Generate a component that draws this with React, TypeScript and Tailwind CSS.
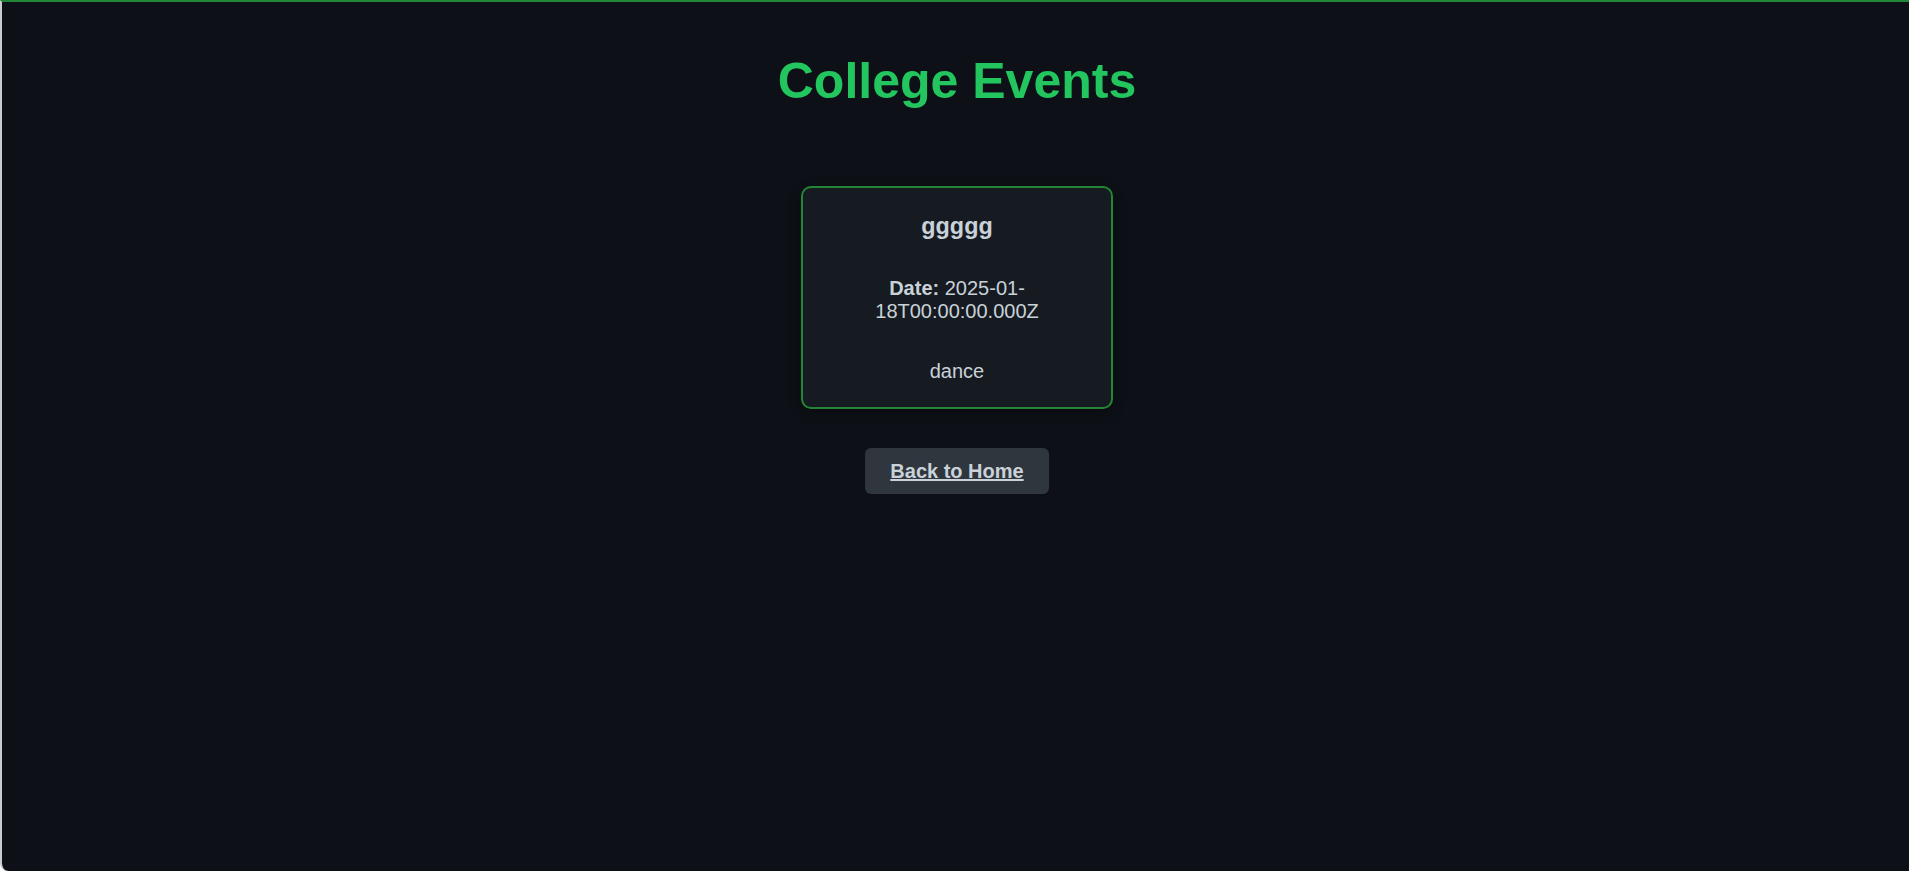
import React from 'react'

interface CollegeEvent {
  name: string
  date: string
  description: string
}

const events: CollegeEvent[] = [
  { name: 'ggggg', date: '2025-01-18T00:00:00.000Z', description: 'dance' },
]

function EventCard({ event }: { event: CollegeEvent }) {
  return (
    <div className="w-[312px] bg-[#161b22] border-2 border-[#238636] rounded-[10px] px-[25px] pt-[25px] pb-[24px] text-center text-[#c9d1d9] shadow-[0_4px_12px_rgba(0,0,0,0.45)]">
      <h3 className="text-[23.4px] leading-[27px] font-bold mb-[37px]">{event.name}</h3>
      <p className="text-[20px] leading-[23px] mb-[37px]">
        <strong className="font-bold">Date:</strong>
        {' ' + event.date}
      </p>
      <p className="text-[20px] leading-[23px]">{event.description}</p>
    </div>
  )
}

export default function App() {
  return (
    <div
      className="h-[871px] w-full bg-[#0d1117] border-t-2 border-t-[#238636] border-l-2 border-l-[#c9ccd1] rounded-bl-[8px] pl-[3px] flex flex-col items-center"
      style={{ fontFamily: '"Liberation Sans", Arial, sans-serif' }}
    >
      <h1 className="mt-[50px] text-[50px] leading-[58px] font-bold text-[#22c55e]">College Events</h1>

      <div className="mt-[76px] flex flex-wrap justify-center gap-5">
        {events.map((event, i) => (
          <EventCard key={i} event={event} />
        ))}
      </div>

      <a
        href="#"
        className="mt-[39px] bg-[#30363d] rounded-[6px] px-[25px] py-[11.5px] text-[20px] leading-[23px] font-bold text-[#c9d1d9] underline"
      >
        Back to Home
      </a>
    </div>
  )
}
